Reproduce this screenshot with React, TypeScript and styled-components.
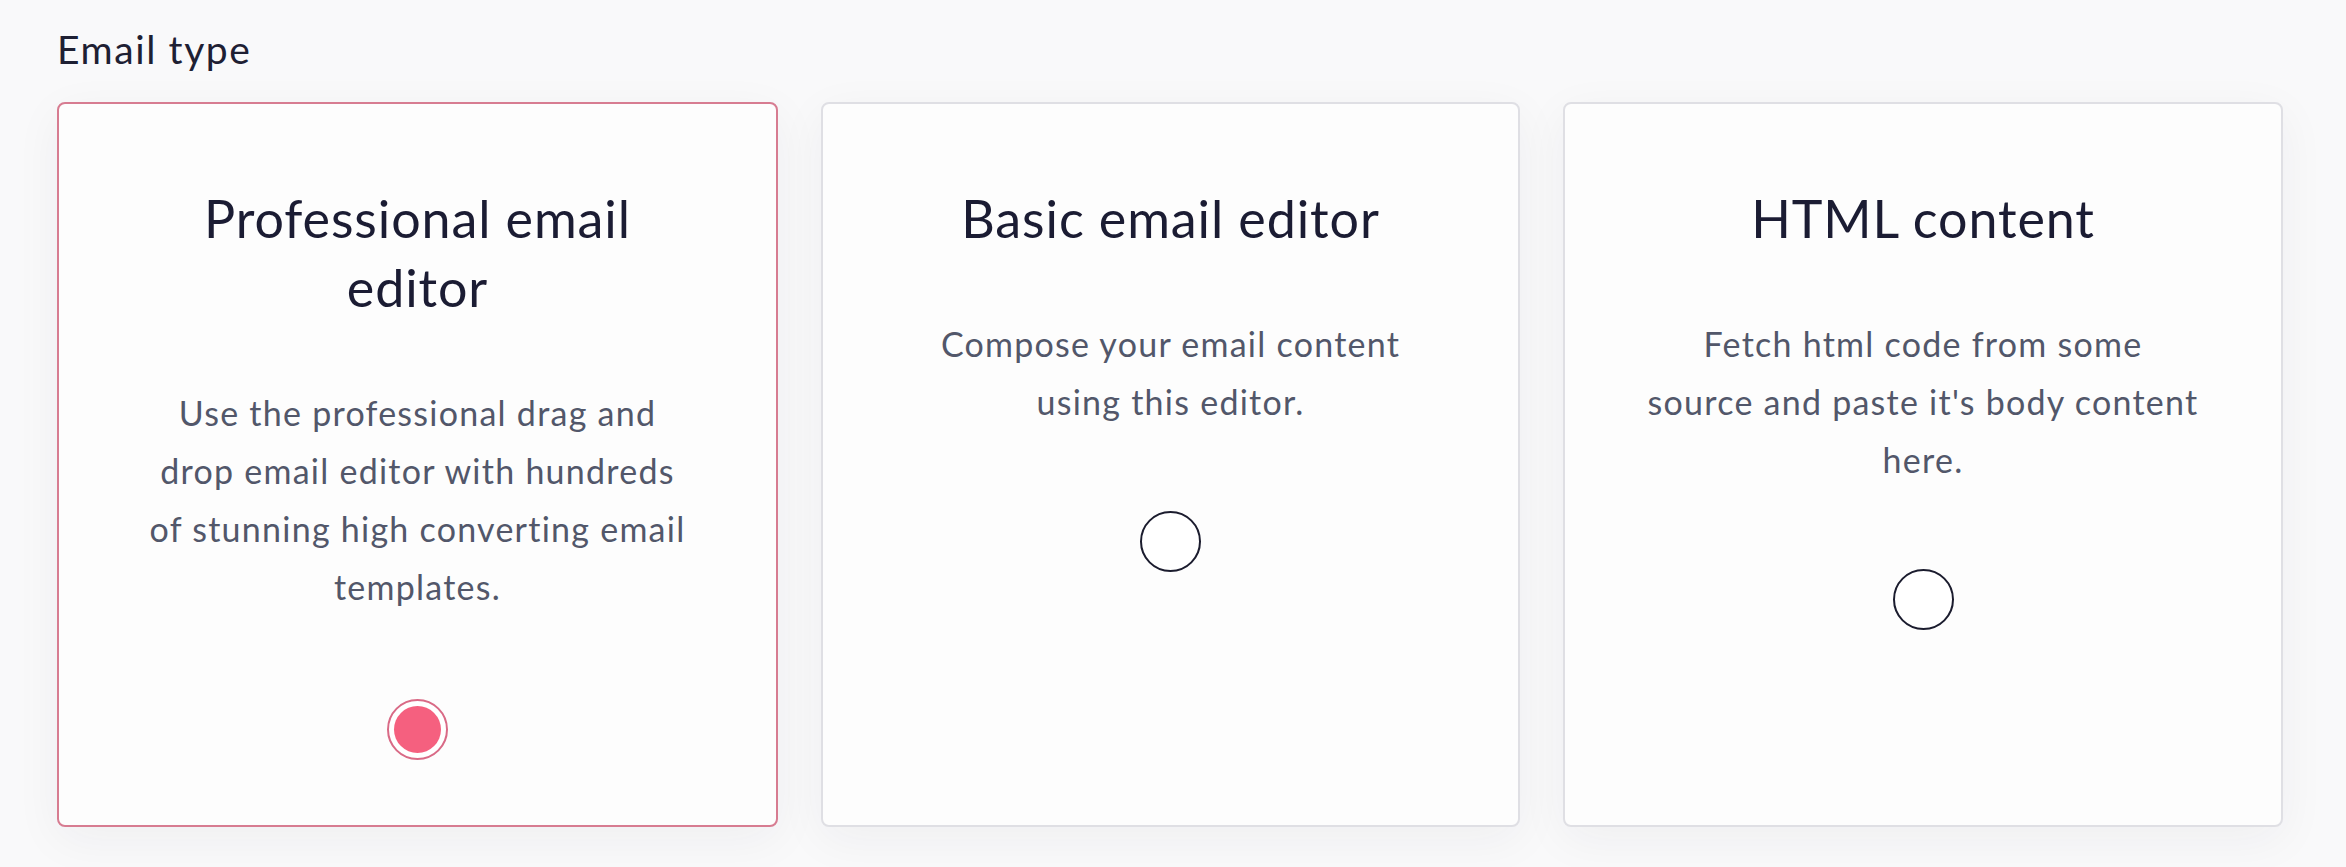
import styled, { createGlobalStyle } from "styled-components";

const GlobalStyle = createGlobalStyle`
  html, body {
    margin: 0;
    padding: 0;
    background: #f9f9fa;
  }
  body {
    font-family: Lato, "Noto Sans", sans-serif;
  }
`;

const Page = styled.div`
  width: 2346px;
  height: 867px;
  padding: 26px 0 0 57px;
  box-sizing: border-box;
  overflow: hidden;
`;

const Label = styled.div`
  font-size: 39px;
  line-height: 46px;
  letter-spacing: 1.6px;
  color: #1e2033;
  margin-bottom: 30px;
`;

const CardRow = styled.div`
  display: grid;
  grid-template-columns: 721px 699px 720px;
  column-gap: 43px;
  align-items: start;
`;

const Card = styled.div<{ $active?: boolean }>`
  height: 725px;
  box-sizing: border-box;
  border: 2px solid ${(p) => (p.$active ? "#d77c91" : "#dfdfe4")};
  border-radius: 8px;
  background: #fdfdfd;
  box-shadow: 0 12px 48px rgba(30, 30, 50, 0.05);
  padding: 80px 10px 0;

  display: flex;
  flex-direction: column;
  align-items: center;
  text-align: center;
`;

const Title = styled.div`
  font-size: 52px;
  line-height: 69px;
  letter-spacing: 0.9px;
  color: #1b1c33;
  margin-bottom: 62px;
`;

const Desc = styled.div`
  font-size: 34px;
  line-height: 58px;
  letter-spacing: 1.25px;
  color: #52576a;
  margin-bottom: 80px;
`;

const Radio = styled.div<{ $checked?: boolean }>`
  width: 61px;
  height: 61px;
  box-sizing: border-box;
  border-radius: 50%;
  border: 2px solid ${(p) => (p.$checked ? "#d96a86" : "#1b1c2e")};
  background: #fff;
  display: flex;
  align-items: center;
  justify-content: center;
  margin-top: ${(p) => (p.$checked ? "3px" : "0")};

  &::after {
    content: "";
    display: ${(p) => (p.$checked ? "block" : "none")};
    width: 47px;
    height: 47px;
    border-radius: 50%;
    background: #f5607f;
  }
`;

const types = [
  {
    title: ["Professional email", "editor"],
    desc: [
      "Use the professional drag and",
      "drop email editor with hundreds",
      "of stunning high converting email",
      "templates.",
    ],
    active: true,
  },
  {
    title: ["Basic email editor"],
    desc: ["Compose your email content", "using this editor."],
    active: false,
  },
  {
    title: ["HTML content"],
    desc: [
      "Fetch html code from some",
      "source and paste it's body content",
      "here.",
    ],
    active: false,
  },
];

const Lines = ({ lines }: { lines: string[] }) => (
  <>
    {lines.map((l, i) => (
      <span key={i}>
        {l}
        {i < lines.length - 1 && <br />}
      </span>
    ))}
  </>
);

export default function App() {
  return (
    <Page>
      <GlobalStyle />
      <Label>Email type</Label>
      <CardRow>
        {types.map((t) => (
          <Card key={t.title[0]} $active={t.active}>
            <Title>
              <Lines lines={t.title} />
            </Title>
            <Desc>
              <Lines lines={t.desc} />
            </Desc>
            <Radio $checked={t.active} />
          </Card>
        ))}
      </CardRow>
    </Page>
  );
}
